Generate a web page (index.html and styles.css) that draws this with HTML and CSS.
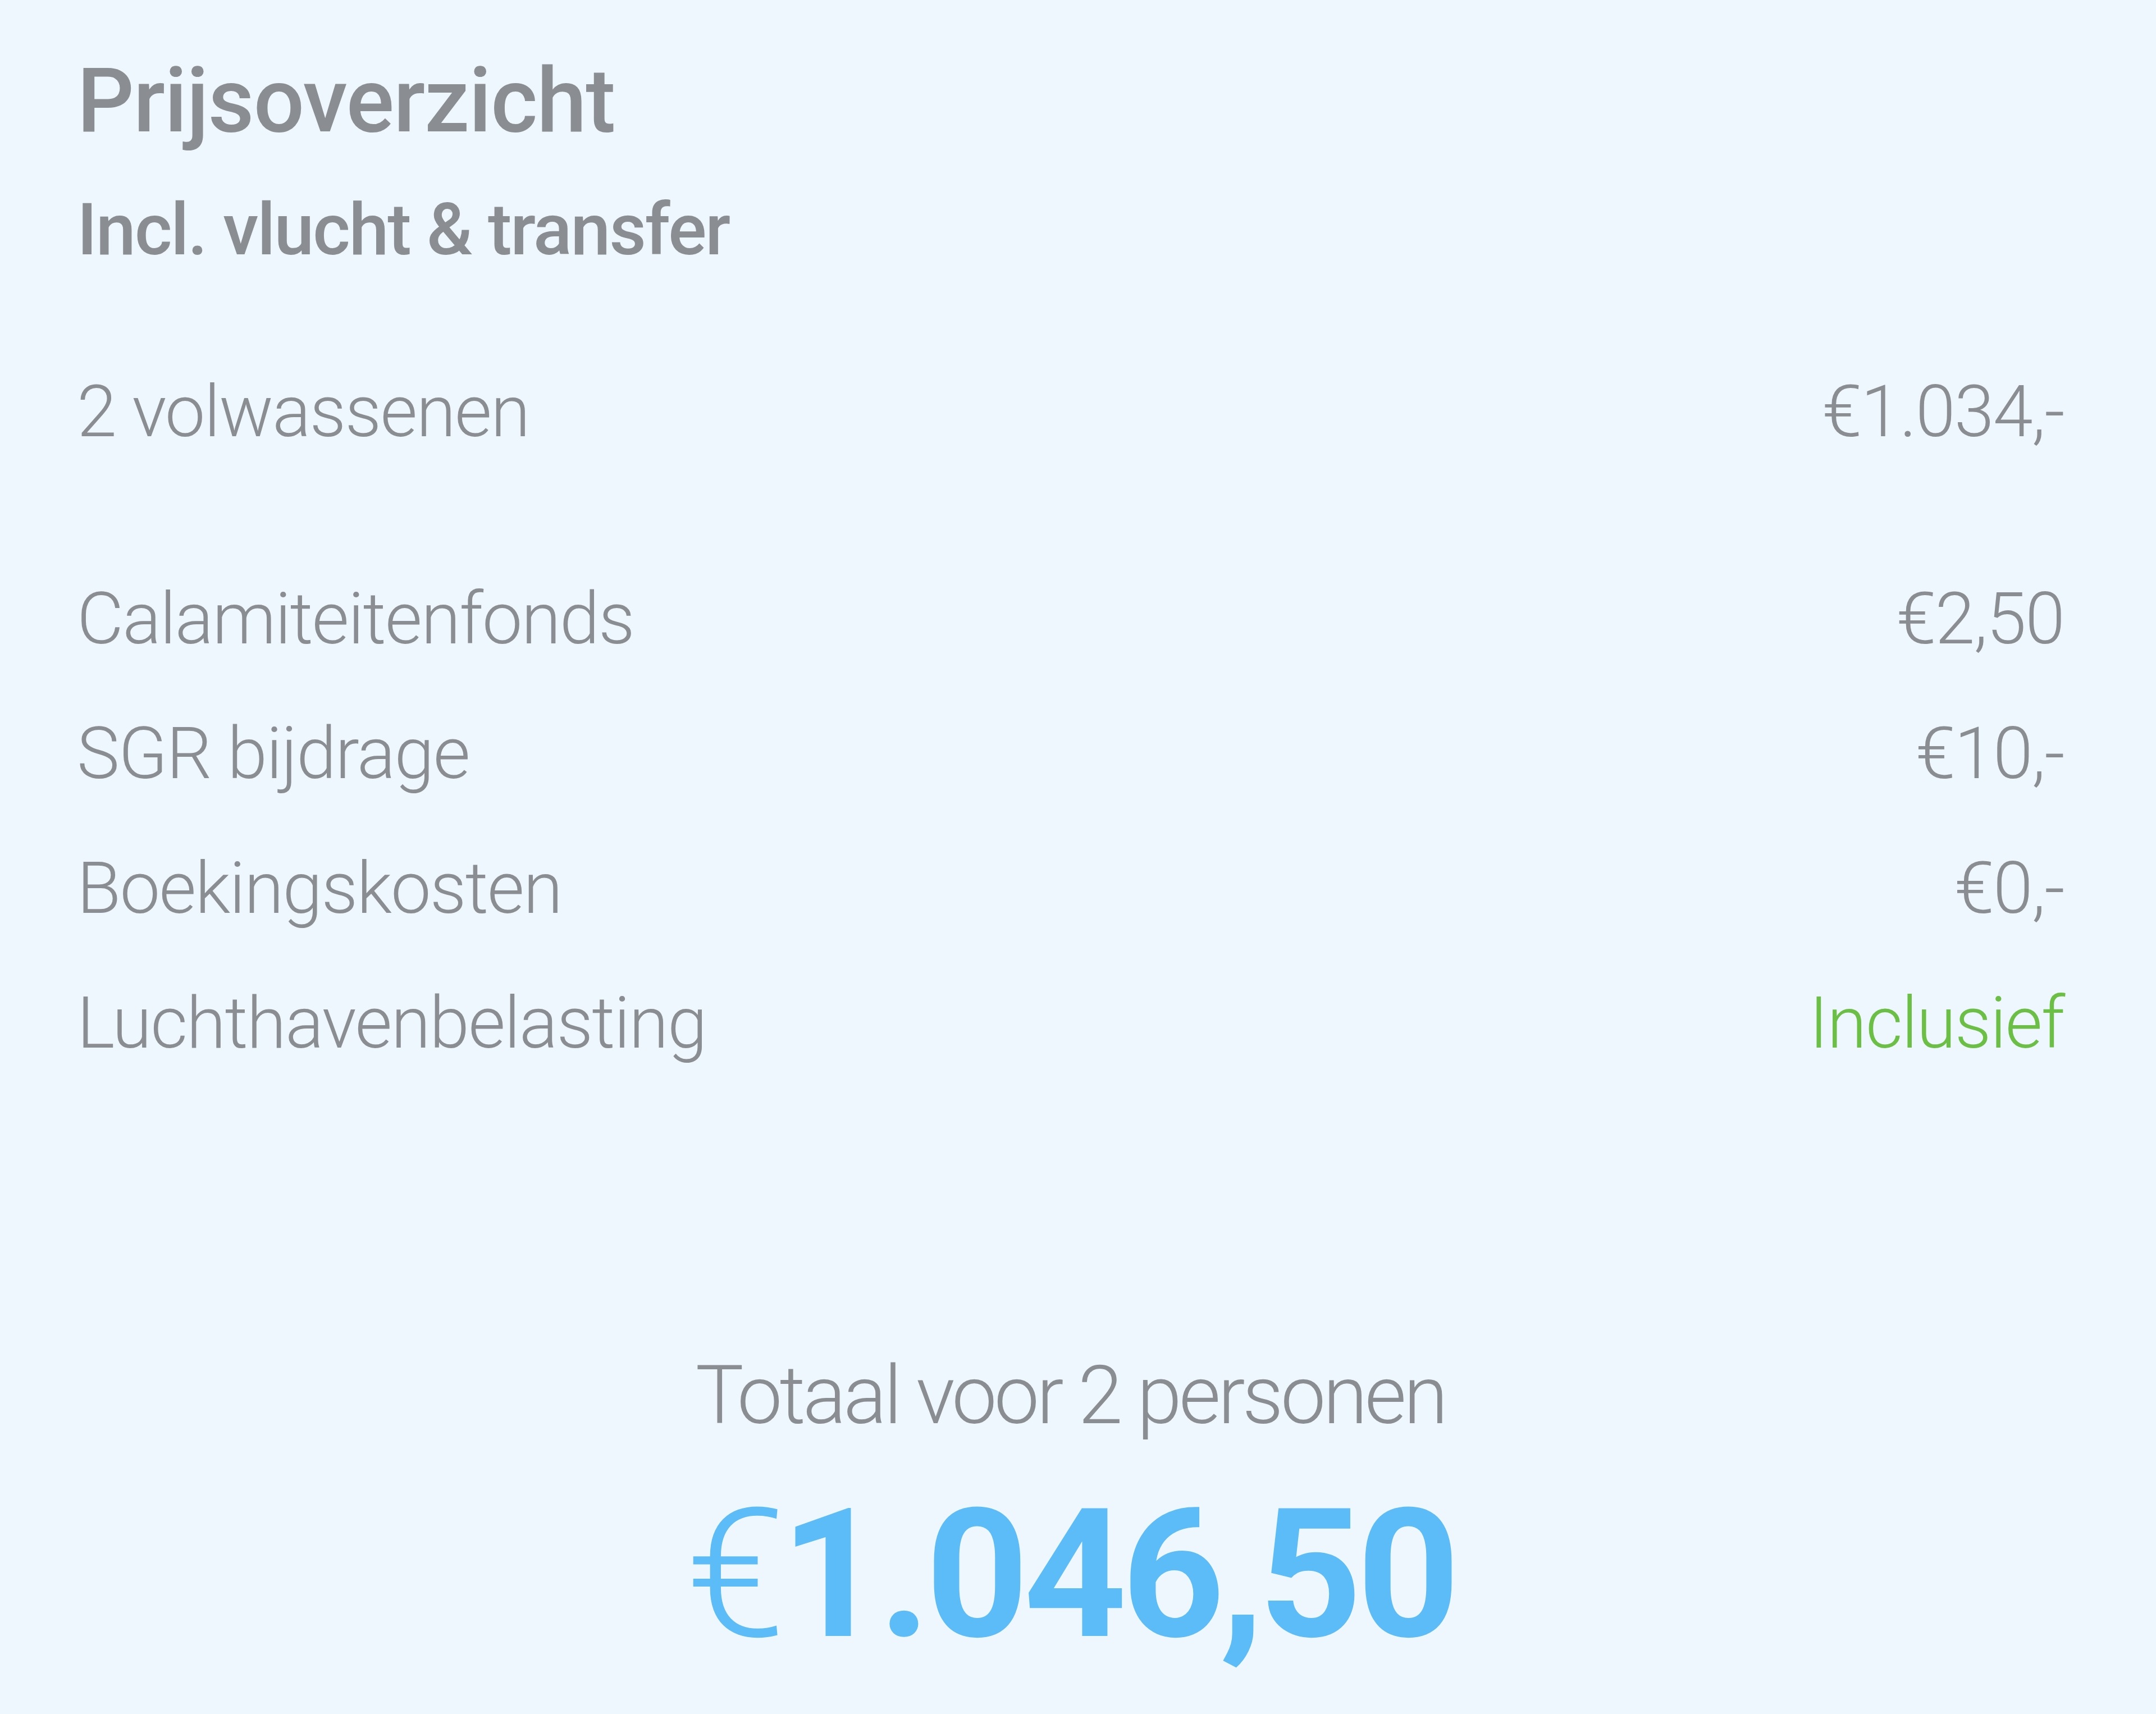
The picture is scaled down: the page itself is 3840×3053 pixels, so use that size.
FILE: index.html
```html
<!DOCTYPE html>
<html lang="nl">
<head>
<meta charset="utf-8">
<title>Prijsoverzicht</title>
<link rel="stylesheet" href="styles.css">
</head>
<body>
<section class="panel">
  <h1 class="title">Prijsoverzicht</h1>
  <p class="subtitle">Incl. vlucht &amp; transfer</p>
  <div class="group group-main">
    <div class="row"><span class="label">2 volwassenen</span><span class="value">€1.034,-</span></div>
  </div>
  <div class="group">
    <div class="row"><span class="label">Calamiteitenfonds</span><span class="value">€2,50</span></div>
    <div class="row"><span class="label">SGR bijdrage</span><span class="value">€10,-</span></div>
    <div class="row"><span class="label">Boekingskosten</span><span class="value">€0,-</span></div>
    <div class="row"><span class="label">Luchthavenbelasting</span><span class="value included">Inclusief</span></div>
  </div>
  <div class="total">
    <div class="total-label">Totaal voor 2 personen</div>
    <div class="total-amount"><span class="currency">€</span>1.046,50</div>
  </div>
</section>
</body>
</html>
```
FILE: styles.css
```css
html, body {
  margin: 0;
  padding: 0;
  background: #eff7fe;
}

body {
  font-family: Roboto, "Liberation Sans", sans-serif;
  color: #8a8d91;
}

.panel {
  box-sizing: border-box;
  width: 3840px;
  min-height: 3053px;
  padding: 80px 164px 88px 137px;
  display: flex;
  flex-direction: column;
}

.title {
  margin: 0;
  font-size: 160px;
  line-height: 200px;
  font-weight: 500;
  letter-spacing: -1.5px;
}

.subtitle {
  margin: 49px 0 0;
  font-size: 128px;
  line-height: 160px;
  font-weight: 500;
  letter-spacing: -2.4px;
}

.group {
  display: flex;
  flex-direction: column;
  gap: 80px;
}

.group-main {
  margin-top: 164px;
  margin-bottom: 209px;
}

.row {
  display: flex;
  justify-content: space-between;
  align-items: baseline;
  font-size: 128px;
  line-height: 160px;
  font-weight: 300;
  letter-spacing: -2px;
}

.value.included {
  color: #6bbf45;
}

.total {
  margin-top: 494px;
  display: flex;
  flex-direction: column;
  align-items: center;
}

.total-label {
  font-size: 144px;
  line-height: 180px;
  font-weight: 300;
  letter-spacing: -5px;
}

.total-amount {
  margin-top: 69px;
  font-size: 320px;
  line-height: 320px;
  font-weight: 700;
  letter-spacing: -9px;
  color: #5bbcf8;
}

.currency {
  font-weight: 300;
}
```
